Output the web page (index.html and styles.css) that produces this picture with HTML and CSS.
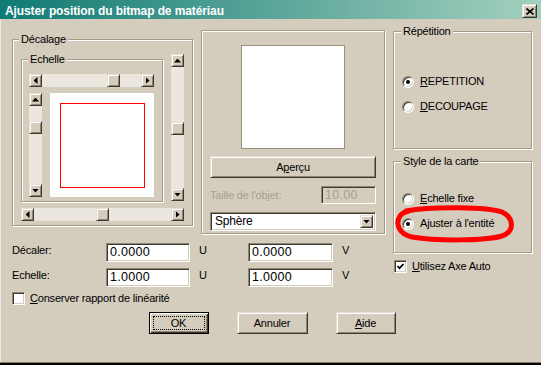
FILE: index.html
```html
<!DOCTYPE html>
<html lang="fr">

<head>
    <meta charset="UTF-8">
    <meta name="viewport" content="width=device-width, initial-scale=1.0">
    <title>Ajuster position du bitmap de matériau</title>
    <link rel="stylesheet" href="styles.css">
</head>

<body>

    <div class="dialog">

        <div class="titlebar">
            <span class="title">Ajuster position du bitmap de matériau</span>
            <span class="close-btn raised">
                <svg width="8" height="7" viewBox="0 0 8 7"><path d="M0.5 0.5l7 6M7.5 0.5l-7 6" stroke="#000" stroke-width="1.6" fill="none"/></svg>
            </span>
        </div>

        <div class="client">
            <div class="upper">

                <div class="left-part">
                    <div class="top-row">

                        <fieldset class="group decalage">
                            <legend>Décalage</legend>
                            <div class="decalage-grid">

                                <fieldset class="group echelle">
                                    <legend>Echelle</legend>
                                    <div class="echelle-grid">
                                        <div class="hscroll span-all">
                                            <span class="sb-btn raised"><i class="arrow left"></i></span>
                                            <span class="sb-track"><span class="thumb raised" style="margin-left: 65px"></span></span>
                                            <span class="sb-btn raised"><i class="arrow right"></i></span>
                                        </div>
                                        <div class="vscroll inner-v">
                                            <span class="sb-btn raised"><i class="arrow up"></i></span>
                                            <span class="sb-track"><span class="thumb raised" style="margin-top: 15px"></span></span>
                                            <span class="sb-btn raised"><i class="arrow down"></i></span>
                                        </div>
                                        <div class="map-box"><div class="map-rect"></div></div>
                                    </div>
                                </fieldset>

                                <div class="vscroll outer-v">
                                    <span class="sb-btn raised"><i class="arrow up"></i></span>
                                    <span class="sb-track"><span class="thumb raised" style="margin-top: 55px"></span></span>
                                    <span class="sb-btn raised"><i class="arrow down"></i></span>
                                </div>

                                <div class="hscroll span-all">
                                    <span class="sb-btn raised"><i class="arrow left"></i></span>
                                    <span class="sb-track"><span class="thumb raised" style="margin-left: 62px"></span></span>
                                    <span class="sb-btn raised"><i class="arrow right"></i></span>
                                </div>

                            </div>
                        </fieldset>

                        <div class="panel">
                            <div class="preview-box"></div>
                            <button class="btn apercu">A<u>p</u>erçu</button>
                            <div class="size-row">
                                <span class="disabled-text">Taille de l'objet:</span>
                                <span class="edit edit-disabled">10.00</span>
                            </div>
                            <div class="combo">
                                <span class="combo-text">Sphère</span>
                                <span class="combo-btn raised"><i class="arrow down"></i></span>
                            </div>
                        </div>

                    </div>

                    <div class="fields">
                        <span class="flabel">Décaler:</span>
                        <span class="edit">0.0000</span>
                        <span class="unit">U</span>
                        <span class="edit">0.0000</span>
                        <span class="unit">V</span>

                        <span class="flabel">Echelle:</span>
                        <span class="edit">1.0000</span>
                        <span class="unit">U</span>
                        <span class="edit">1.0000</span>
                        <span class="unit">V</span>
                    </div>

                    <label class="check-row keep">
                        <span class="checkbox"></span>
                        <span><u>C</u>onserver rapport de linéarité</span>
                    </label>
                </div>

                <div class="right-part">
                    <fieldset class="group repetition">
                        <legend>Répétition</legend>
                        <div class="radio-row first"><span class="radio on"></span><span><u>R</u>EPETITION</span></div>
                        <div class="radio-row"><span class="radio"></span><span><u>D</u>ECOUPAGE</span></div>
                    </fieldset>

                    <fieldset class="group style-carte">
                        <legend>Style de la carte</legend>
                        <div class="radio-row first"><span class="radio"></span><span><u>E</u>chelle fixe</span></div>
                        <div class="radio-row"><span class="radio on"></span><span>Ajuster à l'entité</span></div>
                    </fieldset>

                    <label class="check-row axe">
                        <span class="checkbox">
                            <svg width="7" height="7" viewBox="0 0 7 7"><path d="M0.5 3l2 2.2L6.5 1" stroke="#000" stroke-width="1.7" fill="none"/></svg>
                        </span>
                        <span><u>U</u>tilisez Axe Auto</span>
                    </label>
                </div>

            </div>

            <div class="buttons">
                <button class="btn default"><span class="focus">OK</span></button>
                <button class="btn annuler">Annuler</button>
                <button class="btn"><u>A</u>ide</button>
            </div>
        </div>

        <!-- hand drawn red loop around the selected option -->
        <svg class="scribble" width="124" height="42" viewBox="0 0 124 42">
            <path d="M12 7C40 2 94 3 108 8C119 13 122 27 108 32C90 37 42 37 18 33C5 30 1 20 6 12C8 9 10 8 15 7"
                  stroke="#f00" stroke-width="5" fill="none" stroke-linecap="round"/>
        </svg>

    </div>

</body>

</html>
```

FILE: styles.css
```css
* {
    box-sizing: border-box;
}

body {
    margin: 0;
    background-color: #000;
    font-family: "Liberation Sans", Arial, sans-serif;
    font-size: 11px;
    line-height: 13px;
    letter-spacing: -0.2px;
    color: #000;
}

.dialog {
    position: relative;
    width: 541px;
    height: 363px;
    background-color: #d4cdbd;
    border-bottom: 1px solid #857b68;
}

/* title bar */
.titlebar {
    display: flex;
    justify-content: space-between;
    align-items: flex-start;
    height: 19px;
    padding: 4px 4px 0 5px;
    background: linear-gradient(to right, #0f7a74, #a4d0be);
}

.title {
    font-weight: bold;
    font-size: 12px;
    line-height: 14px;
    letter-spacing: -0.1px;
    color: #fff;
}

.close-btn {
    display: flex;
    align-items: center;
    justify-content: center;
    width: 15px;
    height: 14px;
}

/* 3d look */
.raised {
    background-color: #d4cdbd;
    border: 1px solid;
    border-color: #e4dfd5 #3c3a34 #3c3a34 #e4dfd5;
    box-shadow: inset 1px 1px 0 #fff, inset -1px -1px 0 #8f8672;
}

.client {
    height: 343px;
    padding: 6px 9px 0 11px;
    border-left: 1px solid #ece8e0;
}

.upper {
    display: flex;
    gap: 8px;
}

.left-part {
    width: 373px;
}

.right-part {
    width: 139px;
}

.top-row {
    display: flex;
    align-items: flex-start;
    gap: 8px;
}

/* group boxes */
.group {
    margin: 0;
    padding: 0;
    min-width: 0;
    border: 1px solid #a69b85;
    box-shadow: inset 1px 1px 0 #fff, 1px 1px 0 #fff;
}

.group legend {
    padding: 0 2px;
    line-height: 13px;
    background-color: #d4cdbd;
}

.decalage {
    width: 181px;
    height: 193px;
    margin-top: 8px;
}

.decalage legend {
    margin-left: 6px;
}

.decalage-grid {
    display: grid;
    grid-template-columns: 142px 13px;
    column-gap: 8px;
    row-gap: 6px;
    padding: 7px 0 0 8px;
}

.echelle {
    width: 142px;
    height: 149px;
}

.echelle legend {
    margin-left: 6px;
}

.echelle-grid {
    display: grid;
    grid-template-columns: 13px 104px;
    column-gap: 8px;
    row-gap: 6px;
    padding: 8px 0 0 7px;
}

.span-all {
    grid-column: 1 / 3;
}

/* scrollbars */
.hscroll {
    display: flex;
    height: 13px;
    background-color: #ebe7df;
}

.vscroll {
    display: flex;
    flex-direction: column;
    width: 13px;
    background-color: #ebe7df;
}

.inner-v {
    height: 104px;
}

.outer-v {
    height: 147px;
    margin-top: 1px;
}

.sb-track {
    flex: 1;
    display: flex;
}

.vscroll .sb-track {
    flex-direction: column;
}

.sb-btn,
.thumb {
    flex: none;
    display: flex;
    align-items: center;
    justify-content: center;
    width: 13px;
    height: 13px;
}

.arrow {
    display: block;
    background-color: #000;
}

.arrow.left {
    width: 4px;
    height: 7px;
    clip-path: polygon(100% 0, 100% 100%, 0 50%);
}

.arrow.right {
    width: 4px;
    height: 7px;
    clip-path: polygon(0 0, 0 100%, 100% 50%);
}

.arrow.up {
    width: 7px;
    height: 4px;
    clip-path: polygon(0 100%, 100% 100%, 50% 0);
}

.arrow.down {
    width: 7px;
    height: 4px;
    clip-path: polygon(0 0, 100% 0, 50% 100%);
}

.map-box {
    width: 104px;
    height: 104px;
    padding: 10px 9px 9px 10px;
    background-color: #fff;
}

.map-rect {
    height: 100%;
    border: 1px solid #f00;
}

/* preview panel */
.panel {
    display: flex;
    flex-direction: column;
    width: 184px;
    height: 204px;
    margin-top: 5px;
    padding: 14px 8px 0;
    border: 1px solid #a69b85;
    box-shadow: inset 1px 1px 0 #fff, 1px 1px 0 #fff;
}

.preview-box {
    align-self: center;
    width: 104px;
    height: 104px;
    background-color: #fff;
    border: 1px solid #9c907a;
}

.btn {
    display: flex;
    align-items: center;
    justify-content: center;
    padding: 0;
    font: inherit;
    letter-spacing: inherit;
    color: #000;
    background-color: #d4cdbd;
    border: 1px solid;
    border-color: #e4dfd5 #3c3a34 #3c3a34 #e4dfd5;
    box-shadow: inset 1px 1px 0 #fff, inset -1px -1px 0 #8f8672;
}

.apercu {
    width: 166px;
    height: 22px;
    margin-top: 7px;
}

.size-row {
    display: flex;
    justify-content: space-between;
    align-items: center;
    height: 18px;
    margin-top: 8px;
}

.disabled-text {
    color: #a89f8e;
}

.edit {
    display: flex;
    align-items: center;
    height: 19px;
    padding: 0 3px;
    font-size: 12.5px;
    letter-spacing: 0.3px;
    background-color: #fff;
    border: 1px solid;
    border-color: #8f8672 #fff #fff #8f8672;
    box-shadow: inset 1px 1px 0 #3c3a34, inset -1px -1px 0 #d4cdbd;
}

.edit-disabled {
    width: 55px;
    height: 18px;
    color: #a89f8e;
    background-color: #d4cdbd;
}

.combo {
    display: flex;
    justify-content: space-between;
    height: 19px;
    margin-top: 8px;
    padding: 2px;
    background-color: #fff;
    border: 1px solid;
    border-color: #8f8672 #fff #fff #8f8672;
    box-shadow: inset 1px 1px 0 #3c3a34, inset -1px -1px 0 #d4cdbd;
}

.combo-text {
    display: flex;
    align-items: center;
    padding-left: 2px;
    font-size: 12px;
}

.combo-btn {
    display: flex;
    align-items: center;
    justify-content: center;
    width: 13px;
}

/* offset / scale fields */
.fields {
    display: grid;
    grid-template-columns: 94px 84px 58px 85px auto;
    grid-auto-rows: 19px;
    row-gap: 6px;
    margin-top: 9px;
}

.flabel,
.unit {
    line-height: 15px;
}

.unit {
    padding-left: 9px;
}

.check-row {
    display: flex;
    align-items: center;
    gap: 5px;
    height: 13px;
}

.keep {
    margin-top: 5px;
}

.checkbox {
    display: flex;
    align-items: center;
    justify-content: center;
    width: 13px;
    height: 13px;
    background-color: #fff;
    border: 1px solid;
    border-color: #8f8672 #fff #fff #8f8672;
    box-shadow: inset 1px 1px 0 #3c3a34, inset -1px -1px 0 #d4cdbd;
}

/* right column */
.repetition {
    height: 124px;
    margin-bottom: 6px;
}

.style-carte {
    height: 98px;
}

.repetition legend,
.style-carte legend {
    margin-left: 7px;
}

.radio-row {
    display: flex;
    align-items: center;
    gap: 6px;
    height: 13px;
    margin: 12px 0 0 8px;
}

.repetition .first {
    margin-top: 37px;
}

.style-carte .first {
    margin-top: 24px;
}

.radio {
    display: flex;
    align-items: center;
    justify-content: center;
    width: 12px;
    height: 12px;
    border-radius: 50%;
    background-color: #fff;
    border: 1px solid;
    border-color: #8f8672 #fff #fff #8f8672;
    box-shadow: inset 1px 1px 0 #3c3a34, inset -1px -1px 0 #d4cdbd;
}

.radio.on::after {
    content: "";
    width: 4px;
    height: 4px;
    border-radius: 50%;
    background-color: #000;
}

.axe {
    margin: 7px 0 0 1px;
}

/* bottom buttons */
.buttons {
    display: flex;
    justify-content: center;
    gap: 28px;
    margin-top: 7px;
}

.buttons .btn {
    width: 60px;
    height: 22px;
}

.buttons .annuler {
    width: 71px;
}

.btn.default {
    padding: 3px;
    border-color: #000;
    box-shadow: inset 1px 1px 0 #fff, inset -1px -1px 0 #3c3a34, inset -2px -2px 0 #8f8672;
}

.focus {
    flex: 1;
    align-self: stretch;
    display: flex;
    align-items: center;
    justify-content: center;
    border: 1px dotted #000;
}

.scribble {
    position: absolute;
    left: 394px;
    top: 204px;
}
```
